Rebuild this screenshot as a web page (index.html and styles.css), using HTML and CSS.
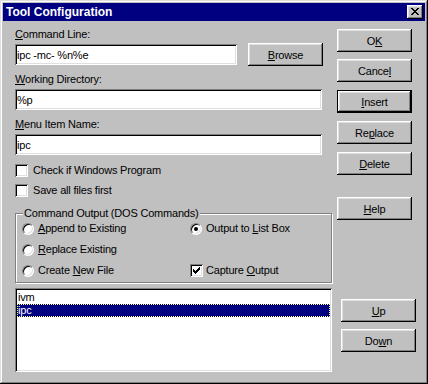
FILE: index.html
```html
<!DOCTYPE html>
<html lang="en">
<head>
    <meta charset="UTF-8">
    <title>Tool Configuration</title>
    <link rel="stylesheet" href="styles.css">
</head>
<body>
    <div class="window">
        <div class="titlebar">
            <span class="title">Tool Configuration</span>
            <button class="close">
                <svg width="16" height="14" viewBox="0 0 16 14">
                    <path fill="#000" d="M4 3h2v1H4zM10 3h2v1h-2zM5 4h2v1H5zM9 4h2v1H9zM6 5h4v1H6zM7 6h2v1H7zM6 7h4v1H6zM5 8h2v1H5zM9 8h2v1H9zM4 9h2v1H4zM10 9h2v1h-2z"/>
                </svg>
            </button>
        </div>

        <div class="client">
            <div class="left">
                <label class="field-label first"><u>C</u>ommand Line:</label>
                <div class="field-row">
                    <input class="textbox cmd" type="text" value="ipc -mc- %n%e">
                    <button class="btn browse"><u>B</u>rowse</button>
                </div>

                <label class="field-label"><u>W</u>orking Directory:</label>
                <input class="textbox wide" type="text" value="%p">

                <label class="field-label"><u>M</u>enu Item Name:</label>
                <input class="textbox wide" type="text" value="ipc">

                <div class="check-row first-check"><span class="checkbox"></span><span>Check if Windows Program</span></div>
                <div class="check-row"><span class="checkbox"></span><span>Save all files first</span></div>

                <div class="group">
                    <span class="group-title">Command Output (DOS Commands)</span>
                    <div class="option"><span class="radio"></span><span><u>A</u>ppend to Existing</span></div>
                    <div class="option"><span class="radio checked"></span><span>Output to <u>L</u>ist Box</span></div>
                    <div class="option"><span class="radio"></span><span><u>R</u>eplace Existing</span></div>
                    <div class="option"></div>
                    <div class="option"><span class="radio"></span><span>Create <u>N</u>ew File</span></div>
                    <div class="option">
                        <span class="checkbox small-gap">
                            <svg width="7" height="7" viewBox="0 0 7 7">
                                <path fill="#000" d="M6 0h1v1H6zM5 1h2v1H5zM0 2h1v1H0zM4 2h3v1H4zM0 3h2v1H0zM3 3h3v1H3zM0 4h5v1H0zM1 5h3v1H1zM2 6h1v1H2z"/>
                            </svg>
                        </span>
                        <span>Capture <u>O</u>utput</span>
                    </div>
                </div>

                <div class="listbox">
                    <div class="item">ivm</div>
                    <div class="item selected">ipc</div>
                </div>
            </div>

            <div class="buttons">
                <button class="btn ok">O<u>K</u></button>
                <button class="btn next">Cance<u>l</u></button>
                <button class="btn default next"><u>I</u>nsert</button>
                <button class="btn next">Re<u>p</u>lace</button>
                <button class="btn next"><u>D</u>elete</button>
                <button class="btn help"><u>H</u>elp</button>
                <button class="btn move up"><u>U</u>p</button>
                <button class="btn move next">Do<u>w</u>n</button>
            </div>
        </div>
    </div>
</body>
</html>
```

FILE: styles.css
```css
* {
    margin: 0;
    padding: 0;
    box-sizing: border-box;
}

body {
    font-family: 'Liberation Sans', Arial, sans-serif;
    font-size: 11px;
    letter-spacing: -0.2px;
    color: #000;
    background: #c0c0c0;
}

u {
    text-decoration: underline;
    text-underline-offset: 1px;
}

.window {
    width: 428px;
    height: 384px;
    padding: 3px;
    background: #c0c0c0;
    box-shadow: inset -1px -1px #000, inset 1px 1px #dfdfdf,
                inset -2px -2px #808080, inset 2px 2px #fff;
}

/* title bar */
.titlebar {
    display: flex;
    align-items: center;
    height: 18px;
    padding-left: 3px;
    background: #000080;
    color: #fff;
}

.title {
    flex: 1;
    font-size: 12px;
    font-weight: bold;
    letter-spacing: 0;
    line-height: 18px;
}

.close {
    display: flex;
    width: 16px;
    height: 14px;
    margin-right: 2px;
    border: none;
    background: #c0c0c0;
    box-shadow: inset -1px -1px #000, inset 1px 1px #fff,
                inset -2px -2px #808080, inset 2px 2px #dfdfdf;
}

/* dialog body */
.client {
    display: flex;
    padding: 7px 0 0 12px;
}

.left {
    width: 317px;
    display: flex;
    flex-direction: column;
}

.field-label {
    display: block;
    line-height: 13px;
    margin-top: 8px;
}

.field-label.first {
    margin-top: 0;
}

.field-row {
    display: flex;
    align-items: center;
    height: 23px;
    margin-top: 2px;
    margin-bottom: -1px;
}

.textbox {
    height: 21px;
    padding: 0 2px;
    border: none;
    background: #fff;
    font: inherit;
    letter-spacing: inherit;
    color: #000;
    outline: none;
    box-shadow: inset 1px 1px #808080, inset -1px -1px #fff,
                inset 2px 2px #000, inset -2px -2px #dfdfdf;
}

.cmd {
    width: 222px;
}

.wide {
    width: 307px;
    margin-top: 3px;
}

.btn {
    width: 75px;
    height: 23px;
    border: none;
    background: #c0c0c0;
    font: inherit;
    letter-spacing: inherit;
    color: #000;
    box-shadow: inset -1px -1px #000, inset 1px 1px #fff,
                inset -2px -2px #808080, inset 2px 2px #dfdfdf;
}

.btn.default {
    box-shadow: inset 0 0 0 1px #000, inset -2px -2px #000, inset 2px 2px #fff,
                inset -3px -3px #808080, inset 3px 3px #dfdfdf;
}

.browse {
    margin-left: 11px;
}

/* check boxes and radios */
.check-row,
.option {
    display: flex;
    align-items: center;
    height: 13px;
    line-height: 13px;
}

.check-row {
    margin-top: 7px;
}

.check-row.first-check {
    margin-top: 9px;
}

.checkbox {
    display: flex;
    align-items: center;
    justify-content: center;
    width: 13px;
    height: 13px;
    margin-right: 5px;
    background: #fff;
    box-shadow: inset 1px 1px #808080, inset -1px -1px #fff,
                inset 2px 2px #000, inset -2px -2px #dfdfdf;
}

.checkbox.small-gap {
    margin-right: 3px;
}

.radio {
    position: relative;
    width: 12px;
    height: 12px;
    margin-right: 4px;
    border-radius: 50%;
    background: #fff;
    border: 1px solid;
    border-color: #808080 #fff #fff #808080;
    box-shadow: inset 1px 1px #000, inset -1px -1px #dfdfdf;
}

.radio.checked::after {
    content: '';
    position: absolute;
    left: 3px;
    top: 3px;
    width: 4px;
    height: 4px;
    border-radius: 50%;
    background: #000;
}

/* group box */
.group {
    position: relative;
    display: grid;
    grid-template-columns: 168px 1fr;
    row-gap: 8px;
    margin-top: 16px;
    padding: 8px 0 5px 6px;
    border: 1px solid #808080;
    box-shadow: inset 1px 1px #fff, 1px 1px #fff;
}

.group-title {
    position: absolute;
    top: -7px;
    left: 7px;
    padding: 0 1px;
    line-height: 13px;
    background: #c0c0c0;
}

/* list */
.listbox {
    height: 84px;
    margin-top: 5px;
    padding: 3px 2px 2px;
    background: #fff;
    box-shadow: inset 1px 1px #808080, inset -1px -1px #fff,
                inset 2px 2px #000, inset -2px -2px #dfdfdf;
}

.item {
    height: 13px;
    line-height: 13px;
    padding-left: 1px;
}

.item.selected {
    background: #000080;
    color: #fff;
    outline: 1px dotted #ffff80;
    outline-offset: -1px;
}

/* right hand buttons */
.buttons {
    display: flex;
    flex-direction: column;
    width: 80px;
    margin-left: 5px;
}

.ok {
    margin-top: 1px;
}

.next {
    margin-top: 7px;
}

.btn.default {
    margin-top: 8px;
}

.btn.default + .next,
.btn.default + .next + .next {
    margin-top: 8px;
}

.help {
    margin-top: 22px;
}

.move {
    margin-left: 4px;
}

.up {
    margin-top: 79px;
}
```
